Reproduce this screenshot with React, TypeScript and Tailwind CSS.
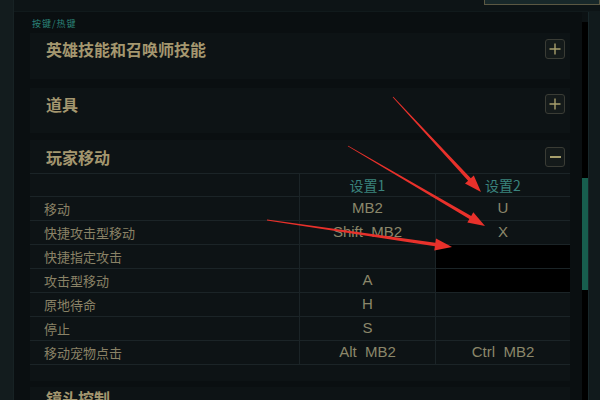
import React from 'react';

const rows = [
    { name: '移动', a: 'MB2', b: 'U' },
    { name: '快捷攻击型移动', a: 'Shift  MB2', b: 'X' },
    { name: '快捷指定攻击', a: '', b: '', hidden: true },
    { name: '攻击型移动', a: 'A', b: '', hidden: true },
    { name: '原地待命', a: 'H', b: '' },
    { name: '停止', a: 'S', b: '' },
    { name: '移动宠物点击', a: 'Alt  MB2', b: 'Ctrl  MB2' },
];

const cjk = { fontFamily: '"Noto Sans CJK SC", "Noto Sans", sans-serif' };
const latin = { fontFamily: '"Liberation Sans", Arial, sans-serif' };

function ToggleButton({ open }: { open?: boolean }) {
    return (
        <div className="w-[20px] h-[20px] rounded-[3px] border border-[#3a3c35] bg-[#141a1a] flex items-center justify-center">
            {open ? (
                <div className="w-[11px] h-[2px] bg-[#a79f6c]" />
            ) : (
                <svg width="12" height="12" viewBox="0 0 12 12">
                    <path d="M6 0.5V11.5M0.5 6H11.5" stroke="#a79f6c" strokeWidth="1.4" />
                </svg>
            )}
        </div>
    );
}

function Section({ title, open, h }: { title: string; open?: boolean; h: string }) {
    return (
        <div className={`bg-[#0d1315] ${h} shrink-0 flex items-center justify-between pl-[16px] pr-[5px]`}>
            <span className="text-[16px] font-bold text-[#a4976f] -mt-[14px]" style={cjk}>{title}</span>
            <div className="-mt-[14px]">
                <ToggleButton open={open} />
            </div>
        </div>
    );
}

// tapered red arrow from tail to tip
function arrow(x1: number, y1: number, x2: number, y2: number) {
    const dx = x2 - x1;
    const dy = y2 - y1;
    const len = Math.hypot(dx, dy);
    const ux = dx / len;
    const uy = dy / len;
    const nx = -uy;
    const ny = ux;
    const head = 17;
    const hx = x2 - ux * head;
    const hy = y2 - uy * head;
    const p = (x: number, y: number) => `${x.toFixed(1)},${y.toFixed(1)}`;
    return [
        p(x1 + nx * 0.4, y1 + ny * 0.4),
        p(hx + nx * 1.8, hy + ny * 1.8),
        p(hx + nx * 6, hy + ny * 6),
        p(x2, y2),
        p(hx - nx * 6, hy - ny * 6),
        p(hx - nx * 1.8, hy - ny * 1.8),
        p(x1 - nx * 0.4, y1 - ny * 0.4),
    ].join(' ');
}

export default function App() {
    return (
        <div className="relative w-[600px] h-[400px] overflow-hidden bg-[#0a0f11] flex">
            {/* left frame */}
            <div className="w-[14px] shrink-0 bg-[#131c1e] border-r border-[#172224]" />

            <div className="flex-1 flex flex-col min-w-0">
                {/* top bar */}
                <div className="h-[12px] shrink-0 bg-[#0d1416] border-b border-[#111a1c] flex justify-end">
                    <div className="w-[116px] h-[6px] -mt-[1px] border border-[#5b5843] bg-[#18282a]" />
                </div>

                <div className="flex-1 flex min-h-0 overflow-hidden">
                    {/* content */}
                    <div className="flex-1 pl-[16px] pr-[12px] flex flex-col">
                        <div className="h-[21px] shrink-0 flex items-end pb-[5px] pl-[2px]">
                            <span className="text-[9px] leading-[9px] text-[#2b8579] tracking-[1px]" style={cjk}>按键/热键</span>
                        </div>

                        <Section title="英雄技能和召唤师技能" h="h-[46px]" />
                        <div className="h-[9px] shrink-0" />
                        <Section title="道具" h="h-[45px]" />
                        <div className="h-[7px] shrink-0" />

                        <div className="bg-[#0d1315] shrink-0">
                            <div className="h-[33px] flex items-center justify-between pl-[16px] pr-[5px]">
                                <span className="text-[16px] font-bold text-[#a4976f]" style={cjk}>玩家移动</span>
                                <ToggleButton open />
                            </div>
                            <div className="border-t border-[#1b2427]">
                                <div className="grid grid-cols-[270px_136px_134px] h-[23px] border-b border-[#1b2427]">
                                    <div className="border-r border-[#1b2427]" />
                                    <div className="border-r border-[#1b2427] flex items-center justify-center text-[14px] text-[#3a837d]" style={cjk}>设置1</div>
                                    <div className="flex items-center justify-center text-[14px] text-[#3a837d]" style={cjk}>设置2</div>
                                </div>
                                {rows.map((r) => (
                                    <div key={r.name} className="grid grid-cols-[270px_136px_134px] h-[24px] border-b border-[#1b2427]">
                                        <div className="border-r border-[#1b2427] flex items-center pl-[14px] text-[13px] text-[#8a8266]" style={cjk}>{r.name}</div>
                                        <div className="border-r border-[#1b2427] flex items-center justify-center text-[15px] text-[#8b876a]" style={latin}>
                                            <span className="whitespace-pre">{r.a}</span>
                                        </div>
                                        <div className={`flex items-center justify-center text-[15px] text-[#8b876a] ${r.hidden ? 'bg-black' : ''}`} style={latin}>
                                            <span className="whitespace-pre">{r.b}</span>
                                        </div>
                                    </div>
                                ))}
                                <div className="h-[16px]" />
                            </div>
                        </div>
                        <div className="h-[6px] shrink-0" />
                        <div className="bg-[#0d1315] h-[46px] shrink-0 flex items-start pl-[16px]">
                            <span className="text-[16px] leading-[22px] font-bold text-[#a4976f]" style={cjk}>镜头控制</span>
                        </div>
                    </div>

                    {/* scrollbar */}
                    <div className="w-[6px] shrink-0 flex flex-col">
                        <div className="h-[10px] shrink-0 bg-[#0c1214]" />
                        <div className="flex-1 bg-black flex flex-col">
                            <div className="h-[156px] shrink-0" />
                            <div className="h-[112px] shrink-0 bg-[#175e4e]" />
                        </div>
                    </div>
                    {/* right frame */}
                    <div className="w-[12px] shrink-0 bg-[#111a1c] border-l border-[#18272a]" />
                </div>
            </div>

            {/* annotation arrows */}
            <svg className="absolute inset-0 pointer-events-none" width="600" height="400">
                <polygon points={arrow(393, 97, 481, 192)} fill="#e8312b" />
                <polygon points={arrow(348, 146, 485, 226)} fill="#e8312b" />
                <polygon points={arrow(267, 220, 452, 247)} fill="#e8312b" />
            </svg>
        </div>
    );
}
